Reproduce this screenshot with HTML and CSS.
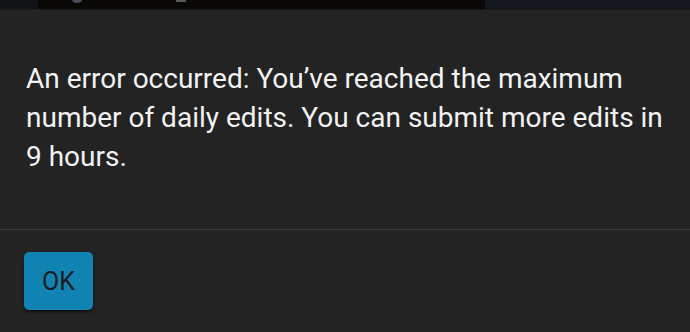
FILE: index.html
```html
<!DOCTYPE html>
<html lang="en">
<head>
    <meta charset="UTF-8">
    <meta name="viewport" content="width=device-width, initial-scale=1.0">
    <title>Error</title>
    <link rel="stylesheet" href="styles.css">
</head>
<body>
    <!-- strip of the page behind the dialog -->
    <div class="top-strip">
        <span class="strip-side"></span>
        <span class="strip-mid">
            <span class="strip-dot"></span>
            <span class="strip-mark"></span>
        </span>
        <span class="strip-side right"></span>
    </div>

    <div class="dialog">
        <p class="message">An error occurred: You’ve reached the maximum number of daily edits. You can submit more edits in 9 hours.</p>
        <div class="actions">
            <button class="ok-btn">OK</button>
        </div>
    </div>
</body>
</html>
```

FILE: styles.css
```css
body {
    margin: 0;
    background: #232323;
    font-family: Roboto, "Liberation Sans", sans-serif;
    color: #f2f2f2;
    height: 332px;
    overflow: hidden;
}

.top-strip {
    display: flex;
    height: 9px;
    background: #0a0805;
    border-bottom: 1px solid #1b1b1b;
}

.strip-side {
    width: 38px;
    background: #111316;
}

.strip-side.right {
    width: 205px;
    margin-left: auto;
    background: #14171b;
}

.strip-mid {
    position: relative;
    flex: 1;
}

.strip-dot {
    position: absolute;
    left: 34px;
    top: -4px;
    width: 10px;
    height: 7px;
    border-radius: 50%;
    background: #4a4d55;
}

.strip-mark {
    position: absolute;
    left: 138px;
    top: 0;
    width: 10px;
    height: 2px;
    background: #5a5a5a;
}

.dialog {
    display: flex;
    flex-direction: column;
}

.message {
    margin: 0;
    padding: 49px 20px 0 26px;
    font-size: 28px;
    line-height: 39px;
    height: 220px;
    box-sizing: border-box;
    border-bottom: 1px solid #3a3a3a;
}

.actions {
    padding: 22px 24px;
}

.ok-btn {
    width: 69px;
    height: 58px;
    background: #1183b3;
    border: none;
    border-radius: 5px;
    color: #1c1c1c;
    font-family: Roboto, "Liberation Sans", sans-serif;
    font-size: 25px;
    box-shadow: 0 2px 3px rgba(0, 0, 0, 0.6);
    padding: 0;
}
```
